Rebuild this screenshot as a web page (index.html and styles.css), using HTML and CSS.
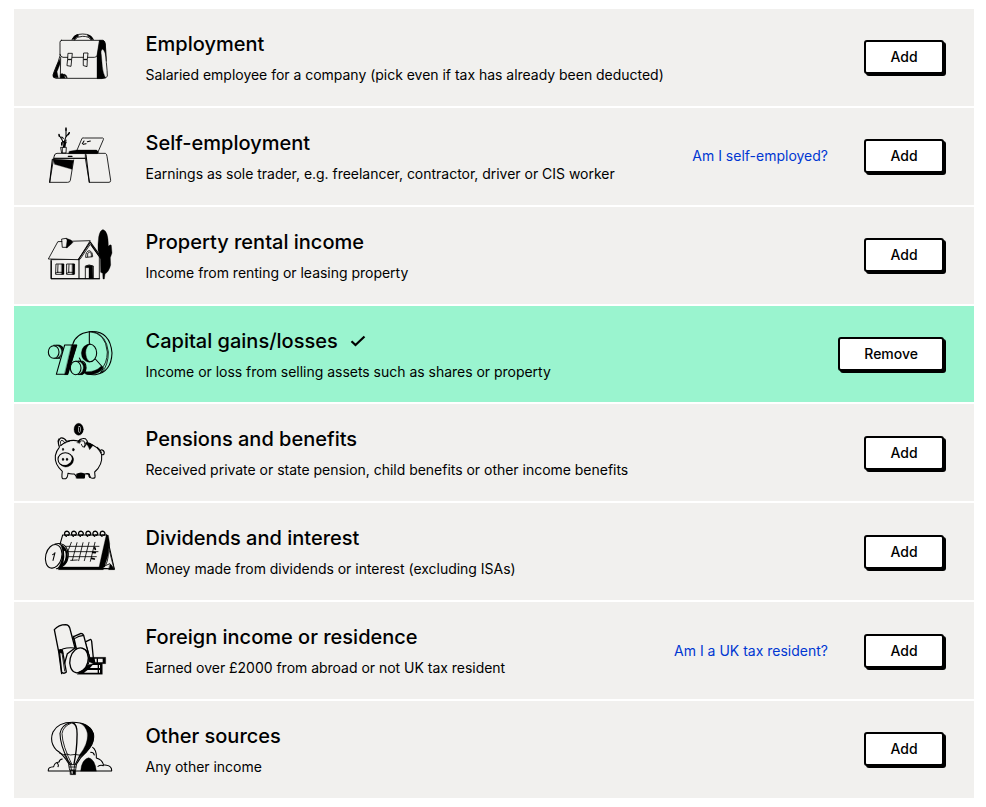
FILE: index.html
```html
<!DOCTYPE html>
<html lang="en">
<head>
<meta charset="utf-8">
<title>Income sources</title>
<link rel="stylesheet" href="styles.css">
</head>
<body>
<main class="sources">
  <section class="row">
    <svg class="art" viewBox="0 -48 240 291">
      <path d="M96 44Q102 27 128 27Q154 27 160 44M104 44Q110 34 128 34Q148 34 153 44"/>
      <path class="k" d="M97 42Q103 29 114 28L116 34Q108 36 104 44zM143 29Q155 31 160 43L153 44Q150 35 143 34z"/>
      <path d="M64 46H188Q195 47 196 57L199 112Q202 140 202 153Q200 160 190 160H48Q38 158 39 150Q43 137 54 112L60 92V52Q60 47 64 46z"/>
      <path d="M60 88Q61 96 69 97H163Q172 96 172 90L179 47M62 97L61 158"/>
      <path class="k" d="M179 46H190Q195 48 196 58L199 108Q197 78 187 72Q181 78 184 90L187 125Q189 146 197 158L185 161H171V92zM54 112Q59 106 60 102V118L51 140L55 158H42Q37 156 40 147zM61 148Q67 142 73 150L75 159H61zM73 147Q80 149 82 158H78Q76 151 71 149z"/>
      <path class="p" d="M85 85H97L95 103H84zM84 104H95L93 124L82 122zM132 84H144L142 103H131zM131 104H142L141 125L131 122z"/>
    </svg>
    <div class="copy"><h2>Employment</h2><p>Salaried employee for a company (pick even if tax has already been deducted)</p></div>
    <button>Add</button>
  </section>
  <section class="row">
    <svg class="art" viewBox="0 -36 240 291">
      <path class="b" d="M71 82L67 61L57 45M72 68L78 49L78 26M77 52L87 39M68 64L79 68M75 80L78 60M65 51L70 55"/>
      <path class="d" d="M57 43L58 49M78 24V31M88 38L85 44M65 68V75M73 64V80"/>
      <path d="M63 82H79L78 99H66z"/><path d="M67 83V98"/>
      <path class="p" d="M110 93L126 55Q128 53 133 54H188Q192 55 190 59L174 96H110z"/>
      <path class="k" d="M88 94L110 90H170L176 97L172 101H86z"/>
      <path d="M127 71L132 63M130 73L138 71M142 65L151 63" class="b"/>
      <path class="k" d="M39 117L100 121L96 148L44 133z"/>
      <path d="M43 107Q44 100 51 100H196Q200 101 201 109L212 181Q212 187 207 187H148L136 115H41L29 187H83Q90 187 91 181L101 120M136 103V115M43 107L41 115H136"/>
      <path class="b" d="M37 118L29 187M138 104L148 187"/><path d="M85 109H96" class="d"/>
    </svg>
    <div class="copy"><h2>Self-employment</h2><p>Earnings as sole trader, e.g. freelancer, contractor, driver or CIS worker</p></div>
    <a>Am I self-employed?</a>
    <button>Add</button>
  </section>
  <section class="row">
    <svg class="art" viewBox="0 -45 240 291">
      <path class="k" d="M189 23Q180 23 176 45L174 67V85L181 109L182 151L188 154L189 171H193L195 156Q207 149 212 129L211 107L216 93L214 70Q210 65 205 73Q205 25 189 23z"/>
      <path class="p" d="M34 113L120 112L152 65L178 103V170H34z"/>
      <path class="p" d="M53 60L25 111L115 113L150 57z"/>
      <path class="b" d="M115 113L151 60L187 110L181 108L153 69M117 114V170M34 116V170M34 170H179"/>
      <path class="p" d="M66 51L79 49L84 54L82 76H68z"/>
      <path class="k" d="M79 49L93 54L99 61L91 69L83 76L78 78L81 56z"/>
      <path class="p" d="M137 105Q137 87 148 86Q158 89 158 103z"/><path d="M143 104V94Q148 87 154 94V104"/>
      <path d="M49 126H71L70 157H48zM81 126H103L102 157H81zM54 128L53 151H67M87 128L86 151H100M47 153L54 151M80 154L87 151"/>
      <path class="k" d="M139 132Q148 127 158 132L159 170H147V137L137 137zM65 126H72V157H65zM97 126H104V157H97z"/>
      <path d="M136 170V132Q146 126 160 132V170"/>
    </svg>
    <div class="copy"><h2>Property rental income</h2><p>Income from renting or leasing property</p></div>
    <button>Add</button>
  </section>
  <section class="row selected">
    <svg class="art" viewBox="0 -48 240 288">
      <path class="b" d="M98 68Q106 35 148 29Q210 24 216 93Q214 151 166 158Q142 159 133 151"/>
      <path d="M148 29Q197 31 202 90Q201 126 184 140M163 30Q199 39 205 90Q205 130 186 151"/>
      <path class="b" d="M148 29V66M166 111L190 138L182 152M118 108Q124 118 122 119"/>
      <path class="k" d="M133 149Q166 152 184 132L189 138L181 148Q163 160 138 157z"/>
      <ellipse class="p b" cx="150" cy="93" rx="20" ry="26"/>
      <path class="k" d="M151 66Q126 67 124 93Q125 118 149 121Q137 109 137 92Q138 72 151 66z"/>
      <path class="b" d="M41 70H58Q68 73 69 81M43 109H59"/>
      <path class="k" d="M50 70Q66 76 65 92Q61 106 48 109L60 107L69 85Q66 72 56 70z"/>
      <ellipse class="p b" cx="41" cy="90" rx="16" ry="19"/>
      <path class="p b" d="M74 69H110L83 157H49z"/>
      <path class="k" d="M95 69H111L83 158H74z"/>
      <path class="p b" d="M107 118H128Q139 123 138 138Q136 155 125 157H104z"/>
      <path class="k" d="M115 117Q132 124 130 139Q128 154 114 158H127Q139 151 138 137Q136 122 124 118z"/>
      <ellipse class="p b" cx="107" cy="138" rx="16" ry="20"/>
    </svg>
    <div class="copy"><h2>Capital gains/losses <svg class="check" viewBox="0 0 16 12"><path d="M1.5 6.2L5.5 10L14.5 1.5"/></svg></h2><p>Income or loss from selling assets such as shares or property</p></div>
    <button>Remove</button>
  </section>
  <section class="row">
    <svg class="art" viewBox="0 -33 240 291">
      <ellipse class="k" cx="116" cy="43" rx="14" ry="18"/><ellipse class="w" cx="118" cy="43" rx="4" ry="10"/><path class="d" d="M118 37V49"/>
      <path class="b" d="M58 95Q51 77 62 69Q72 67 80 79Q99 74 115 78Q123 68 136 71Q143 77 142 84Q174 92 185 119Q188 151 164 171L165 183Q167 190 158 190Q150 190 148 177Q142 174 134 177L133 188H112L103 177Q91 178 84 175Q83 189 77 191H68Q64 188 67 169Q43 148 46 122Q49 107 58 97"/>
      <path d="M63 91Q58 77 66 76Q73 78 75 85M120 81Q123 75 132 78Q137 88 133 96Q127 99 124 88"/>
      <path class="b" d="M62 92Q75 80 88 79M133 96Q139 91 138 85"/>
      <path class="k" d="M138 82Q151 82 159 91L149 104Q143 88 137 87zM109 177Q124 170 135 177L133 190H109zM119 85Q118 77 125 72L118 74L111 82zM57 94Q52 82 57 76L57 70L53 78zM139 177Q147 173 149 183L152 189Q146 190 145 179z"/>
      <ellipse class="b" cx="76" cy="133" rx="22" ry="20"/>
      <path class="k" d="M97 123Q107 136 93 150Q75 164 60 147Q77 157 92 142Q98 134 97 123z"/>
      <ellipse class="k" cx="69" cy="133" rx="2.5" ry="4"/><ellipse class="k" cx="81" cy="133" rx="2.5" ry="4"/>
      <ellipse class="k" cx="69" cy="103" rx="2" ry="4"/><ellipse class="k" cx="100" cy="104" rx="3" ry="4"/>
      <path class="b" d="M183 112Q180 102 187 105Q195 109 192 117Q188 121 185 118M172 97Q181 103 184 113"/>
    </svg>
    <div class="copy"><h2>Pensions and benefits</h2><p>Received private or state pension, child benefits or other income benefits</p></div>
    <button>Add</button>
  </section>
  <section class="row">
    <svg class="art" viewBox="0 -51 240 291">
      <path class="b" d="M68 45H200L223 147L186 145M68 45L60 73M59 146H223"/>
      <path class="d" d="M79 49Q70 42 76 35Q84 31 88 40Q87 48 81 45M100 49Q91 42 97 35Q105 31 109 40Q108 48 102 45M121 49Q112 42 118 35Q126 31 130 40Q129 48 123 45M143 49Q134 42 140 35Q148 31 152 40Q151 48 145 45M164 49Q155 42 161 35Q169 31 173 40Q172 48 166 45M186 49Q177 42 183 35Q191 31 195 40Q194 48 188 45"/>
      <path class="k" d="M199 44L205 46L209 71L207 98L195 134L195 140L176 147Q186 100 199 44zM59 141H190V149H55zM211 130L224 149H206z"/>
      <path class="p" d="M204 76L222 146L210 131L196 137Q209 115 204 76z"/>
      <path d="M76 79H177M80 95H174M86 110H169M92 121L112 120M94 67L78 109M111 68L97 121M129 68L116 122M147 67L133 122M165 67L151 124"/>
      <path class="dash" d="M164 83L166 88M158 97L166 98M155 115L163 117"/>
      <path class="b" d="M45 72Q77 64 85 99Q86 139 49 146"/>
      <path class="k" d="M60 72Q83 80 84 112Q81 138 53 145Q64 134 67 103Q68 84 60 72z"/>
      <ellipse class="p b" cx="41" cy="109" rx="24" ry="36" transform="rotate(14 41 109)"/>
      <path class="b" d="M45 98L39 121M38 104L44 100"/>
      <path class="w" d="M75 92Q81 111 70 130Q75 112 72 94z"/>
    </svg>
    <div class="copy"><h2>Dividends and interest</h2><p>Money made from dividends or interest (excluding ISAs)</p></div>
    <button>Add</button>
  </section>
  <section class="row">
    <svg class="art" viewBox="0 -39 240 291">
      <path class="p heavy" d="M133 82L152 73Q154 73 155 79L160 129L148 139z"/>
      <path class="b" d="M137 86L151 133"/>
      <path class="p heavy" d="M101 65L123 55Q128 55 131 61L144 111L113 119z"/>
      <path class="b" d="M105 70Q118 61 130 62M99 63L108 101"/>
      <path class="p heavy" d="M43 44Q56 29 77 29Q86 30 89 38L105 99L82 116L65 176L56 110z"/>
      <path class="b" d="M56 110Q69 96 104 99"/>
      <path class="p heavy" d="M58 106L65 172Q72 178 79 171L67 105Q60 102 58 106z"/><path d="M66 114L74 168"/>
      <path class="k" d="M57 105H67L70 116L60 113z"/>
      <path class="k" d="M147 127H197V146H187V178H112L127 164L146 149L160 146L149 141z"/>
      <path class="w" d="M164 131H188V142H166zM158 150H180V159H150zM143 165H180V173H132z"/>
      <path class="d" d="M172 131V143M175 149V174"/>
      <ellipse class="p heavy" cx="117" cy="136" rx="27" ry="38" transform="rotate(14 117 136)"/>
      <path class="b" d="M126 100Q149 106 149 134Q144 163 113 173"/>
    </svg>
    <div class="copy"><h2>Foreign income or residence</h2><p>Earned over £2000 from abroad or not UK tax resident</p></div>
    <a>Am I a UK tax resident?</a>
    <button>Add</button>
  </section>
  <section class="row">
    <svg class="art" viewBox="0 -42 240 291">
      <path class="b" d="M25 168Q23 156 41 155Q43 143 57 141Q59 133 67 132M25 168H215Q216 154 200 151Q194 149 190 149Q187 134 169 129Q170 105 158 97M52 144Q57 151 54 155M152 112Q161 112 163 120M174 154Q181 149 190 152"/>
      <path class="k" d="M122 168Q124 134 146 128Q166 134 169 168z"/>
      <path class="p b" d="M90 153Q72 119 49 105Q27 80 39 51Q54 22 98 22Q146 22 160 55Q166 84 139 111Q119 127 107 153z"/>
      <path class="k" d="M121 25Q163 33 161 70Q159 92 137 112L116 130L104 152L119 119Q146 85 142 54Q137 33 121 25z"/>
      <path class="b" d="M91 23Q64 30 60 55Q60 89 84 136L95 152"/><path d="M95 24Q69 33 66 56Q67 92 97 151"/>
      <path class="heavy" d="M98 24Q113 27 111 65Q111 103 101 152"/>
      <path d="M58 114L71 119Q82 115 91 120Q105 116 122 121L138 112M73 119L92 154M121 121L103 153"/>
      <path class="p" d="M87 149H109L107 165H90z"/><path d="M88 156H108M92 150L94 164M104 150L102 164"/>
      <path class="k" d="M90 166H107V179H91z"/><path class="w" d="M94 169H98V176H95z"/>
    </svg>
    <div class="copy"><h2>Other sources</h2><p>Any other income</p></div>
    <button>Add</button>
  </section>
</main>
</body>
</html>
```
FILE: styles.css
```css
* { box-sizing: border-box; }
body {
  margin: 0;
  background: #fff;
  color: #000;
  font-family: Inter, "Liberation Sans", sans-serif;
}
.sources {
  display: flex;
  flex-direction: column;
  gap: 2px;
  width: 960px;
  margin: 9px 0 0 14px;
}
.row {
  --bg: #f1f0ee;
  display: flex;
  align-items: center;
  height: 97px;
  padding: 0 30px 0 26px;
  background: var(--bg);
}
.row.selected { --bg: #9af4cf; height: 96px; }
.art {
  flex: none;
  width: 80px;
  height: 100%;
  margin-right: 25.5px;
  fill: none;
  stroke: #000;
  stroke-width: 2.5;
  stroke-linejoin: round;
  stroke-linecap: round;
}
.art .k { fill: #000; stroke-width: 1; }
.art .p { fill: var(--bg); }
.art .w { fill: var(--bg); stroke: none; }
.art .b { stroke-width: 3.2; }
.art .heavy { stroke-width: 4; }
.art .d { stroke-width: 4; }
.art .dash { stroke-width: 5; }
.copy { flex: 1; white-space: nowrap; }
h2 {
  display: flex;
  align-items: center;
  gap: 12px;
  margin: 0 0 7px;
  font-size: 20px;
  font-weight: 500;
  line-height: 28px;
}
p { margin: 0; font-size: 14px; line-height: 20px; letter-spacing: -0.02px; }
.check {
  width: 16px;
  height: 12px;
  fill: none;
  stroke: #000;
  stroke-width: 2.2;
}
a { margin-right: 36px; color: #0037d2; font-size: 14px; line-height: 20px; }
button {
  min-width: 80px;
  height: 34px;
  padding: 0 24px;
  border: 2px solid #000;
  border-radius: 3px;
  background: #fff;
  box-shadow: 2px 2px 0 #000;
  color: #000;
  font: 500 14px/20px Inter, "Liberation Sans", sans-serif;
}
.row:nth-child(-n+3) > :is(a, button),
.row:last-child > button { margin-bottom: 1px; }
```
